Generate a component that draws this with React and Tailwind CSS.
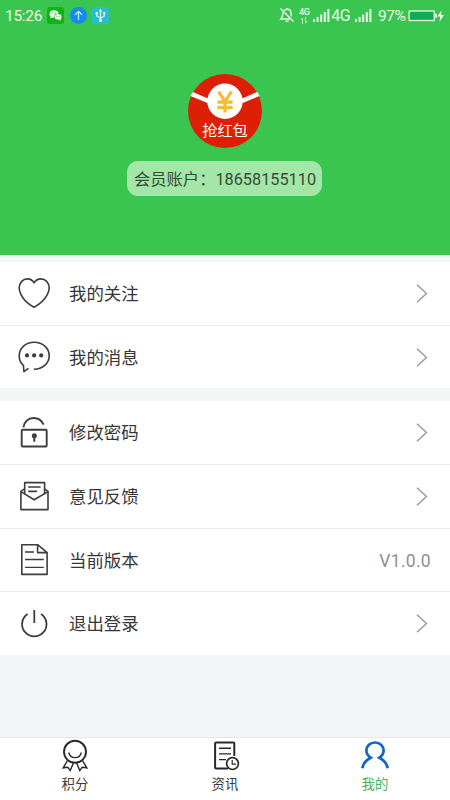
import React from "react";

const HeartIcon = () => (
  <path d="M17 31.3C12 28.6 6.6 24 3.9 18.4C2.8 16 2.1 13.9 2.2 11.8C2.4 6.4 6 2.9 10.4 2.9C13.3 2.9 15.7 4.4 17.1 6.8C18.5 4.4 21 2.9 23.9 2.9C28.4 2.9 32 6.4 32.2 11.8C32.3 13.9 31.6 16 30.4 18.4C27.6 24 22 28.6 17 31.3Z" />
);

const MessageIcon = () => (
  <>
    <path d="M11.5 28.4L6.9 31.6L6.4 25.3C3.6 22.9 2.2 19.8 2.2 16C2.2 8.2 8.8 2.2 17.2 2.2C25.6 2.2 32.2 8 32.2 15.7C32.2 23.4 25.6 29.2 16.8 29.2" />
    <g fill="#3d3d3f" stroke="none">
      <circle cx="10" cy="15.4" r="2.1" />
      <circle cx="17.1" cy="15.4" r="2.1" />
      <circle cx="24.2" cy="15.4" r="2.1" />
    </g>
  </>
);

const LockIcon = () => (
  <>
    <rect x="4.7" y="14.7" width="25" height="16.8" rx="1" strokeWidth="1.9" />
    <path d="M6.4 12.4C7.2 6.6 11.4 3 16.6 3C21.2 3 24.7 5.4 26.6 9.6" strokeWidth="1.9" />
    <circle cx="17.3" cy="20.7" r="2.5" fill="#3d3d3f" stroke="none" />
    <path d="M17.3 21V26.8" strokeWidth="2" />
  </>
);

const MailIcon = () => (
  <>
    <path d="M7.7 15.2V3.6H27.6V15.2" />
    <path d="M7.7 9.8L3.9 12.3V30.6H31V12.3L27.6 9.8" />
    <path d="M3.9 12.6L17.2 20.8L31 12.6" />
    <path d="M11.2 8H23.6M11.2 12.4H20" />
  </>
);

const DocIcon = () => (
  <>
    <path d="M20.6 1.7H4.8V31.4H30.1V9.6L20.6 1.7Z" />
    <path d="M20.6 1.7V9.6H30.1" />
    <path d="M8 9H17M8 16.5H26.8M8 24.4H26.8" strokeWidth="1.3" />
  </>
);

const PowerIcon = () => (
  <>
    <path d="M17.3 4V17" strokeWidth="1.8" />
    <path d="M10.6 8A12.2 12.2 0 1 0 24 8" strokeWidth="1.8" />
  </>
);

const GROUPS = [
  [
    { label: "我的关注", Icon: HeartIcon, height: "h-16" },
    { label: "我的消息", Icon: MessageIcon, height: "h-[62px]" },
  ],
  [
    { label: "修改密码", Icon: LockIcon, height: "h-16" },
    { label: "意见反馈", Icon: MailIcon, height: "h-16" },
    { label: "当前版本", Icon: DocIcon, height: "h-[63px]", value: "V1.0.0" },
    { label: "退出登录", Icon: PowerIcon, height: "h-[63px]" },
  ],
];

function Signal({ className }) {
  return (
    <svg className={className} width="17" height="14" viewBox="0 0 17 14" fill="currentColor">
      <rect x="0" y="10" width="2" height="3" />
      <rect x="3.6" y="8" width="2" height="5" />
      <rect x="7.2" y="5.5" width="2" height="7.5" />
      <rect x="10.8" y="3" width="2" height="10" />
      <rect x="14.4" y="0" width="2" height="13" />
    </svg>
  );
}

function StatusBar() {
  return (
    <div className="flex h-8 items-center pl-[5px] pr-[5px] text-[#e9fbe9]">
      <span className="w-[42px] text-[15.5px] leading-8 tracking-[-0.3px]">15:26</span>
      <svg className="-mt-px" width="17" height="17" viewBox="0 0 17 17">
        <rect width="17" height="17" rx="3" fill="#0fb312" />
        <ellipse cx="7" cy="7" rx="4.5" ry="3.7" fill="#f3fff3" />
        <path d="M4 9L3.4 11.6L6.5 10Z" fill="#f3fff3" />
        <ellipse cx="11" cy="9.8" rx="3.8" ry="3.1" fill="#f3fff3" stroke="#0fb312" strokeWidth="0.6" />
        <path d="M12 12L13.3 13.9L14 11Z" fill="#f3fff3" />
        <g fill="#0fb312">
          <circle cx="5.5" cy="6" r="0.6" />
          <circle cx="8.4" cy="6" r="0.6" />
          <circle cx="9.8" cy="9.2" r="0.5" />
          <circle cx="12.2" cy="9.2" r="0.5" />
        </g>
      </svg>
      <svg className="-mt-px ml-[6px]" width="17" height="17" viewBox="0 0 17 17" fill="none">
        <circle cx="8.5" cy="8.5" r="8.5" fill="#128cf0" />
        <path d="M8.5 13V4.5M5 7.8L8.5 4.3L12 7.8" stroke="#c9ecff" strokeWidth="1.3" />
      </svg>
      <svg className="-mt-px ml-[5px]" width="17" height="17" viewBox="0 0 17 17" fill="none">
        <rect width="17" height="17" rx="3" fill="#27bfca" />
        <path d="M8.5 13V3.5M4.8 6.5V9L8.5 11.3L12.2 9V6" stroke="#e7ffff" strokeWidth="1.2" />
        <path d="M8.5 1.8L6.8 4.6H10.2Z" fill="#e7ffff" />
        <circle cx="8.5" cy="13.5" r="1.6" fill="#e7ffff" />
        <circle cx="4.8" cy="6.3" r="1.2" fill="#e7ffff" />
        <rect x="11.2" y="5" width="2" height="2" fill="#e7ffff" />
      </svg>

      <div className="ml-auto flex items-center">
        <svg className="-mt-0.5" width="16" height="16" viewBox="0 0 16 16" fill="none" stroke="currentColor" strokeWidth="1.4">
          <path d="M5 3.6C6 2.6 7 2.2 8 2.2C10.6 2.2 12.2 4.2 12.2 6.8V9.5M3.9 5.3C3.7 7.8 4 9.6 1.8 12H11" />
          <path d="M1.5 1.5L14.5 14.5M6.4 14.2H9.6M8 2.2V1" />
        </svg>
        <div className="-mt-0.5 ml-[3px] flex w-3 flex-col items-center">
          <span className="text-[9px] font-medium leading-[10px] tracking-[-0.4px]">4G</span>
          <svg width="8" height="7" viewBox="0 0 8 7" fill="none" stroke="currentColor" strokeWidth="0.9" opacity="0.8">
            <path d="M2.5 7V1L1 3M5.5 0V6L7 4" />
          </svg>
        </div>
        <Signal className="ml-[3px]" />
        <span className="ml-px text-[16px] leading-8 tracking-[-0.6px]">4G</span>
        <Signal className="ml-[5px]" />
        <span className="ml-[6px] w-[30px] text-[15.5px] leading-8 tracking-[-0.5px]">97%</span>
        <svg className="-mt-px" width="37" height="12" viewBox="0 0 37 12">
          <rect x="1.2" y="1" width="25" height="9.5" fill="#10ab52" stroke="#e9fbe9" strokeWidth="1.3" />
          <rect x="27" y="3.7" width="2" height="4" fill="#e9fbe9" />
          <path d="M33.4 0.5L29.6 6.5H32.3L31.5 11.5L36 5H33Z" fill="#fff" />
        </svg>
      </div>
    </div>
  );
}

function RedPacket() {
  return (
    <svg width="74" height="74" viewBox="0 0 74 74">
      <circle cx="37" cy="37" r="37" fill="#dc1f05" />
      <path d="M4.8 18L20 24.4V29.2L2.4 22Z" fill="#fff" />
      <path d="M69.2 18L54 24.4V29.2L71.6 22Z" fill="#fff" />
      <circle cx="37" cy="27.2" r="17.7" fill="#fff" />
      <path
        d="M30.6 17.6L37 27.5L43.4 17.6M37 27V38.6M29.4 28.2H44.6M29.4 33.6H44.6"
        fill="none"
        stroke="#f9b934"
        strokeWidth="3.2"
      />
      <text x="37" y="62.3" textAnchor="middle" fontSize="15.2" fill="#fff">
        抢红包
      </text>
    </svg>
  );
}

function Row({ label, Icon, height, value, last }) {
  return (
    <div className={`${height} bg-white pt-[14px] pl-[17px] ${last ? "" : "border-b border-[#e9eaea]"}`}>
      <div className="flex h-[35px] items-center">
        <svg width="34" height="35" viewBox="0 0 34 35" fill="none" stroke="#3d3d3f" strokeWidth="1.6" strokeLinejoin="round">
          <Icon />
        </svg>
        <span className="ml-[18px] pt-0.5 text-[17.4px] leading-[35px] text-[#363636]">{label}</span>
        {value ? (
          <span className="ml-auto pt-px pr-[19px] text-[17.5px] tracking-[0.3px] text-[#8f8f8f]">{value}</span>
        ) : (
          <svg className="ml-auto mr-[22px]" width="12" height="35" viewBox="0 0 12 35" fill="none" stroke="#999" strokeWidth="1.4">
            <path d="M1 8.7L10.5 17.5L1 26.3" />
          </svg>
        )}
      </div>
    </div>
  );
}

const MedalIcon = () => (
  <>
    <circle cx="17" cy="13.8" r="11" strokeWidth="1.9" />
    <path d="M10.7 14.5C11.5 18 14 19.7 17 19.7C20 19.7 22.6 18 23.3 14.5" strokeWidth="1.3" />
    <path d="M9.5 22.5L5.2 29.8L9.8 29.2L12.2 32.6L15.4 25M24.5 22.5L28.8 29.8L24.2 29.2L21.8 32.6L18.6 25" strokeWidth="1.4" />
  </>
);

const NewsIcon = () => (
  <>
    <path d="M26.3 18V5.4Q26.3 4.4 25.3 4.4H8.1Q7.1 4.4 7.1 5.4V29.6Q7.1 30.6 8.1 30.6H20" strokeWidth="2" />
    <path d="M11 10.2H23M11 15.9H23M11 21.6H18" strokeWidth="1.4" />
    <circle cx="24.5" cy="25.6" r="5.9" strokeWidth="1.7" />
    <path d="M24.2 21.9V26.1H28" strokeWidth="1.2" />
  </>
);

const UserIcon = () => (
  <path
    d="M4.3 30.3C5.2 25.3 8 22 12.7 19.7C9.9 17.9 8.4 15.6 8.4 12.6C8.4 8 12.2 4.5 17 4.5C21.8 4.5 25.6 8 25.6 12.6C25.6 15.6 24.1 17.9 21.3 19.7C26 22 28.8 25.3 29.7 30.3"
    stroke="#1268be"
    strokeWidth="2.7"
  />
);

const TABS = [
  { label: "积分", Icon: MedalIcon },
  { label: "资讯", Icon: NewsIcon },
  { label: "我的", Icon: UserIcon, active: true },
];

export default function App() {
  return (
    <div className="flex h-[800px] w-[450px] flex-col overflow-hidden bg-[#f3f6f6] font-[Roboto,'Noto_Sans_CJK_SC',sans-serif]">
      <header className="h-[255px] bg-[#3ac550]">
        <StatusBar />
        <div className="flex flex-col items-center pt-[42px]">
          <RedPacket />
          <div className="mt-[13px] mr-px h-[35px] w-[195px] whitespace-nowrap rounded-[11px] bg-[#a4e6a7] pl-[7px] text-[16.3px] leading-[37px] text-[#344b37]">
            会员账户：18658155110
          </div>
        </div>
      </header>

      <main className="flex flex-1 flex-col gap-[13px] pt-[7px]">
        {GROUPS.map((rows, i) => (
          <section key={i}>
            {rows.map((row, j) => (
              <Row key={row.label} {...row} last={j === rows.length - 1} />
            ))}
          </section>
        ))}
      </main>

      <nav className="flex h-[63px] border-t border-[#e6e8e8] bg-white">
        {TABS.map(({ label, Icon, active }) => (
          <div key={label} className="flex flex-1 flex-col items-center">
            <svg width="34" height="35" viewBox="0 0 34 35" fill="none" stroke="#28282a">
              <Icon />
            </svg>
            <span className={`text-[13.4px] leading-6 ${active ? "text-[#4caf55]" : "text-[#3a3a3a]"}`}>{label}</span>
          </div>
        ))}
      </nav>
    </div>
  );
}
